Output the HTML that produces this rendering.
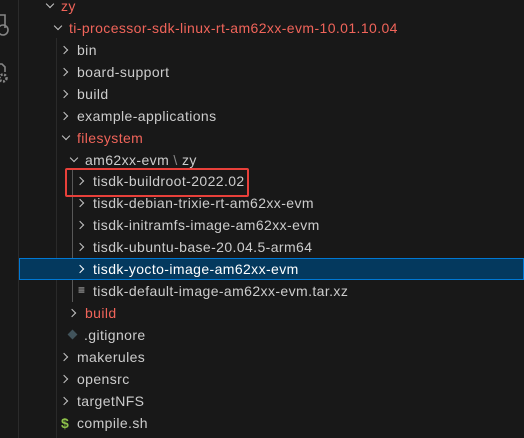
<!DOCTYPE html>
<html><head><style>
body{margin:0;width:524px;height:438px;background:#181818;overflow:hidden;position:relative;font-family:"Liberation Sans",sans-serif;font-size:14px;letter-spacing:0.4px;color:#cccccc}
.ab{position:absolute;left:0;top:0;width:18px;height:438px;background:#181818;border-right:1px solid #2b2b2b}
.r{position:absolute;left:19px;right:0;height:22px;line-height:22px;white-space:nowrap}
.r span{position:absolute}
.c{position:absolute;width:5px;height:5px;border-right:1.4px solid #c5c5c5;border-bottom:1.4px solid #c5c5c5}
.cr{transform:rotate(-45deg)}
.cd{transform:rotate(45deg)}
.red{color:#f0645a}
.g{position:absolute;width:1px;background:#585858}
</style></head><body>
<div class="ab">
<svg width="18" height="90" style="position:absolute;left:0;top:0">
<path d="M-2 15 H5 V28" stroke="#858585" stroke-width="1.6" fill="none"/>
<circle cx="3" cy="30" r="5" stroke="#858585" stroke-width="1.6" fill="none"/>
<path d="M-2 64 H2 L5 67 V72" stroke="#858585" stroke-width="1.6" fill="none"/>
<circle cx="3" cy="78" r="3.5" stroke="#858585" stroke-width="2.5" fill="none" stroke-dasharray="2 1.5"/>
</svg>
</div>
<div class="g" style="left:72px;top:170px;height:132px"></div>
<div class="g" style="left:56px;top:38px;height:400px;background:#2a2a2a"></div>

<div class="r" style="top:-5px"><i class="c cd" style="left:28px;top:6px"></i><span class="red" style="left:42px">zy</span></div>
<div class="r" style="top:17px"><i class="c cd" style="left:36px;top:6px"></i><span class="red" style="left:50px">ti-processor-sdk-linux-rt-am62xx-evm-10.01.10.04</span></div>
<div class="r" style="top:39px"><i class="c cr" style="left:42px;top:8px"></i><span style="left:58px">bin</span></div>
<div class="r" style="top:61px"><i class="c cr" style="left:42px;top:8px"></i><span style="left:58px">board-support</span></div>
<div class="r" style="top:83px"><i class="c cr" style="left:42px;top:8px"></i><span style="left:58px">build</span></div>
<div class="r" style="top:105px"><i class="c cr" style="left:42px;top:8px"></i><span style="left:58px">example-applications</span></div>
<div class="r" style="top:127px"><i class="c cd" style="left:44px;top:6px"></i><span class="red" style="left:58px">filesystem</span></div>
<div class="r" style="top:149px"><i class="c cd" style="left:52px;top:6px"></i><span style="left:66px">am62xx-evm<span style="position:static;color:#888"> \ </span>zy</span></div>
<div class="r" style="top:170px"><i class="c cr" style="left:58px;top:8px"></i><span style="left:74px">tisdk-buildroot-2022.02</span></div>
<div class="r" style="top:192px"><i class="c cr" style="left:58px;top:8px"></i><span style="left:74px">tisdk-debian-trixie-rt-am62xx-evm</span></div>
<div class="r" style="top:214px"><i class="c cr" style="left:58px;top:8px"></i><span style="left:74px">tisdk-initramfs-image-am62xx-evm</span></div>
<div class="r" style="top:236px"><i class="c cr" style="left:58px;top:8px"></i><span style="left:74px">tisdk-ubuntu-base-20.04.5-arm64</span></div>
<div class="r" style="top:258px;background:#04395e;box-shadow:inset 0 0 0 1px #0078d4;color:#fff"><i class="c cr" style="left:58px;top:8px;border-color:#fff"></i><span style="left:74px">tisdk-yocto-image-am62xx-evm</span></div>
<div class="r" style="top:280px"><span style="left:59px;top:-1px;font-size:12px;color:#c5c5c5;line-height:22px">&#8801;</span><span style="left:74px">tisdk-default-image-am62xx-evm.tar.xz</span></div>
<div class="r" style="top:302px"><i class="c cr" style="left:50px;top:8px"></i><span class="red" style="left:66px">build</span></div>
<div class="r" style="top:324px"><i style="position:absolute;left:50px;top:7px;width:7px;height:7px;background:#41535b;transform:rotate(45deg)"></i><span style="left:65px">.gitignore</span></div>
<div class="r" style="top:346px"><i class="c cr" style="left:42px;top:8px"></i><span style="left:58px">makerules</span></div>
<div class="r" style="top:368px"><i class="c cr" style="left:42px;top:8px"></i><span style="left:58px">opensrc</span></div>
<div class="r" style="top:390px"><i class="c cr" style="left:42px;top:8px"></i><span style="left:58px">targetNFS</span></div>
<div class="r" style="top:412px"><span style="left:42px;color:#8dc149;font-weight:bold">$</span><span style="left:58px">compile.sh</span></div>

<div style="position:absolute;left:65px;top:168px;width:180px;height:25px;border:2px solid #e8403a;border-radius:2px"></div>
</body></html>
